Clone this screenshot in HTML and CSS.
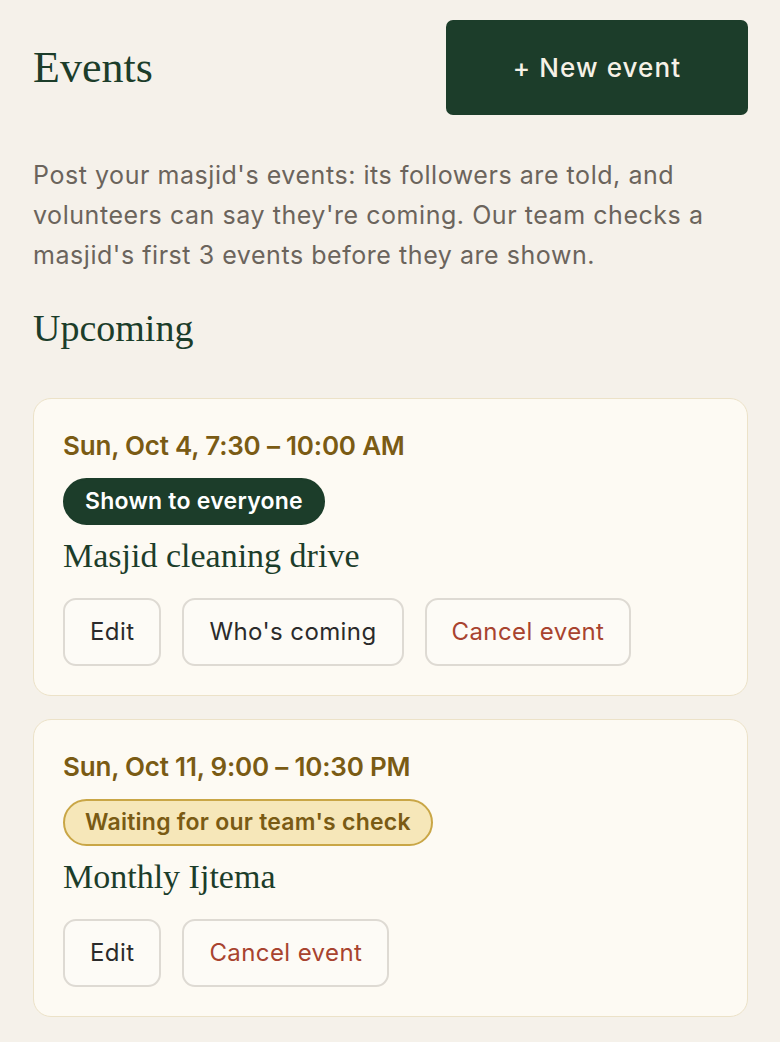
FILE: index.html
```html
<!DOCTYPE html>
<html lang="en">
<head>
<meta charset="utf-8">
<title>Events</title>
<link rel="stylesheet" href="styles.css">
</head>
<body>
<main class="page">
  <header class="header">
    <h1 class="title">Events</h1>
    <button class="new-btn">+ New event</button>
  </header>
  <p class="intro">Post your masjid's events: its followers are told, and volunteers can say they're coming. Our team checks a masjid's first 3 events before they are shown.</p>
  <h2 class="section">Upcoming</h2>
  <div class="list">
    <article class="card">
      <div class="date">Sun, Oct 4, 7:30 – 10:00 AM</div>
      <div><span class="badge badge-live">Shown to everyone</span></div>
      <h3 class="event-name">Masjid cleaning drive</h3>
      <div class="actions">
        <button class="btn">Edit</button>
        <button class="btn">Who's coming</button>
        <button class="btn btn-danger">Cancel event</button>
      </div>
    </article>
    <article class="card">
      <div class="date">Sun, Oct 11, 9:00 – 10:30 PM</div>
      <div><span class="badge badge-pending">Waiting for our team's check</span></div>
      <h3 class="event-name">Monthly Ijtema</h3>
      <div class="actions">
        <button class="btn">Edit</button>
        <button class="btn btn-danger">Cancel event</button>
      </div>
    </article>
  </div>
</main>
</body>
</html>
```
FILE: styles.css
```css
* { box-sizing: border-box; }
html, body { margin: 0; padding: 0; }
body {
  background: #f5f1ea;
  font-family: Inter, "Noto Sans", sans-serif;
  color: #2b2b2b;
}
.page {
  padding: 20px 32px 0 33px;
}
.header {
  display: flex;
  justify-content: space-between;
  align-items: center;
}
.title {
  margin: 0;
  font-family: "Liberation Serif", serif;
  font-weight: 400;
  font-size: 44px;
  color: #1c3d2a;
}
.new-btn {
  width: 302px;
  height: 95px;
  border: none;
  border-radius: 7px;
  background: #1c3d2a;
  color: #f6f1e6;
  font-family: Inter, "Noto Sans", sans-serif;
  font-size: 26px;
  font-weight: 500;
  letter-spacing: 1.1px;
}
.intro {
  margin: 40px 0 0;
  font-size: 25px;
  line-height: 40px;
  letter-spacing: 0.55px;
  color: #6b645c;
}
.section {
  margin: 31px 0 0;
  font-family: "Liberation Serif", serif;
  font-weight: 400;
  font-size: 38px;
  line-height: 1.2;
  color: #1c3d2a;
}
.list {
  margin-top: 46px;
  display: flex;
  flex-direction: column;
  gap: 23px;
}
.card {
  background: #fdfaf3;
  border: 1px solid #ece2c8;
  border-radius: 18px;
  padding: 31px 29px 29px 29px;
}
.date {
  font-size: 26px;
  line-height: 32px;
  font-weight: 600;
  letter-spacing: -0.2px;
  color: #7a5b14;
}
.badge {
  display: inline-flex;
  align-items: center;
  height: 47px;
  margin-top: 16px;
  padding: 0 20px;
  border-radius: 24px;
  border: 2px solid transparent;
  font-size: 23px;
  font-weight: 600;
  letter-spacing: 0.25px;
}
.badge-live {
  background: #1c3d2a;
  border-color: #1c3d2a;
  color: #ffffff;
}
.badge-pending {
  background: #f6e7b9;
  border-color: #c9a646;
  color: #7a5b14;
}
.event-name {
  margin: 10px 0 0;
  font-family: "Liberation Serif", serif;
  font-weight: 400;
  font-size: 34px;
  line-height: 42px;
  color: #1c3d2a;
}
.actions {
  display: flex;
  gap: 21px;
  margin-top: 21px;
}
.btn {
  height: 68px;
  padding: 0 25px;
  border: 2px solid #dedad3;
  border-radius: 13px;
  background: #fdfbf6;
  font-family: Inter, "Noto Sans", sans-serif;
  font-size: 24px;
  letter-spacing: 0.4px;
  color: #2b2b2b;
}
.btn-danger {
  color: #a8432f;
}
```
